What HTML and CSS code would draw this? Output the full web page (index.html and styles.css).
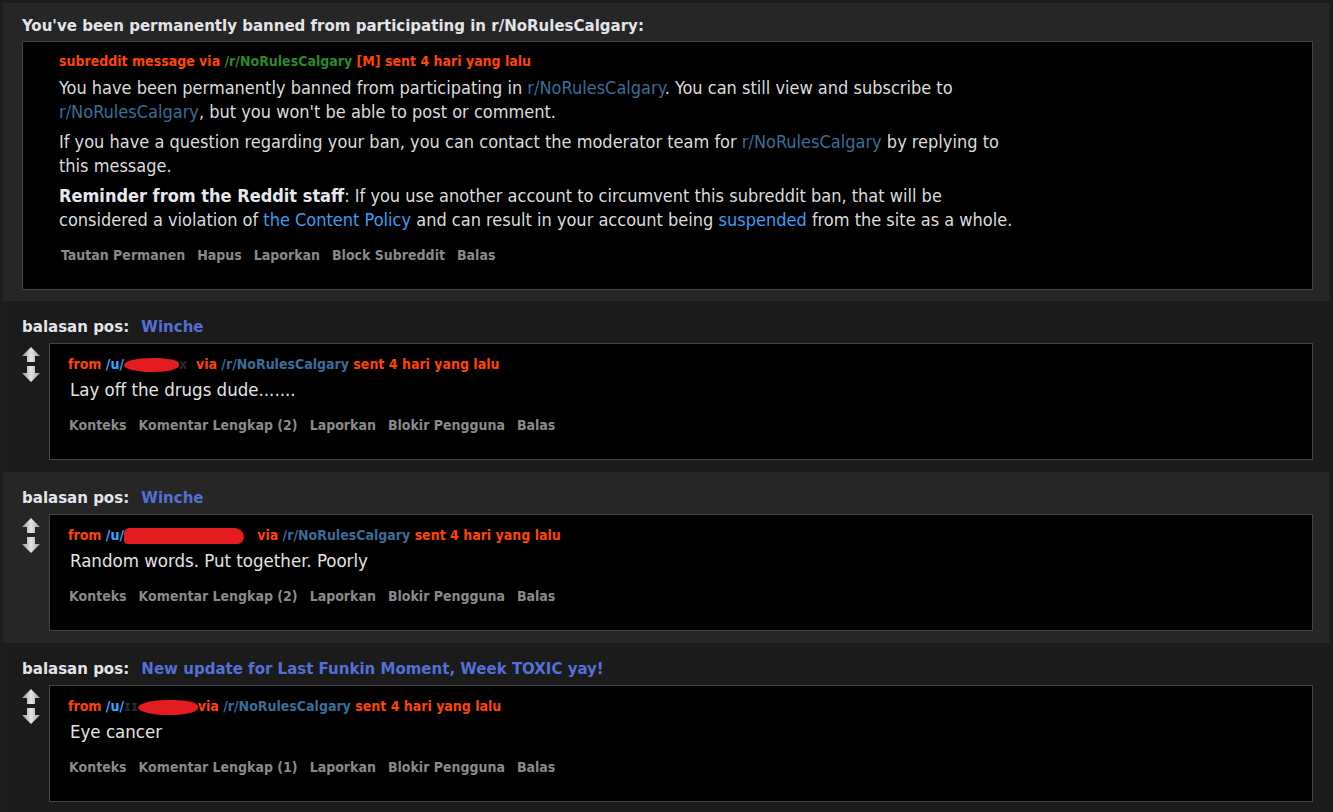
FILE: index.html
```html
<!DOCTYPE html>
<html>
<head>
<meta charset="utf-8">
<link rel="stylesheet" href="styles.css">
</head>
<body>
<div class="page">
  <section class="sect light first">
    <div class="title">You've been permanently banned from participating in r/NoRulesCalgary:</div>
    <div class="box mainbox">
      <div class="head"><span class="or">subreddit message via </span><span class="green">/r/NoRulesCalgary</span> <span class="or">[M] sent 4 hari yang lalu</span></div>
      <p class="para">You have been permanently banned from participating in <span class="sub">r/NoRulesCalgary</span>. You can still view and subscribe to<br><span class="sub">r/NoRulesCalgary</span>, but you won't be able to post or comment.</p>
      <p class="para">If you have a question regarding your ban, you can contact the moderator team for <span class="sub">r/NoRulesCalgary</span> by replying to<br>this message.</p>
      <p class="para"><b>Reminder from the Reddit staff</b>: If you use another account to circumvent this subreddit ban, that will be<br>considered a violation of <span class="link">the Content Policy</span> and can result in your account being <span class="link">suspended</span> from the site as a whole.</p>
      <div class="actions"><span>Tautan Permanen</span><span>Hapus</span><span>Laporkan</span><span>Block Subreddit</span><span>Balas</span></div>
    </div>
  </section>

  <section class="sect dark">
    <div class="title">balasan pos: <span class="post">Winche</span></div>
    <div class="row">
      <div class="votes"><svg width="18" height="36" viewBox="0 0 18 36"><defs><linearGradient id="g1" x1="0" y1="0" x2="1" y2="0"><stop offset="0" stop-color="#9a9a9a"/><stop offset="0.5" stop-color="#e4e4e4"/><stop offset="1" stop-color="#9a9a9a"/></linearGradient></defs><path d="M9 0 L18 9 L13 9 L13 15 L5 15 L5 9 L0 9 Z" fill="url(#g1)"/><path d="M5 19 L13 19 L13 26 L18 26 L9 35 L0 26 L5 26 Z" fill="url(#g1)"/></svg></div>
      <div class="box reply">
        <div class="head"><span class="or">from </span><span class="user">/u/</span><span class="redact r1"></span><span class="ghost">x</span><span class="or">&nbsp; via </span><span class="sub">/r/NoRulesCalgary</span> <span class="or">sent 4 hari yang lalu</span></div>
        <div class="msg">Lay off the drugs dude.......</div>
        <div class="actions"><span>Konteks</span><span>Komentar Lengkap (2)</span><span>Laporkan</span><span>Blokir Pengguna</span><span>Balas</span></div>
      </div>
    </div>
  </section>

  <section class="sect light">
    <div class="title">balasan pos: <span class="post">Winche</span></div>
    <div class="row">
      <div class="votes"><svg width="18" height="36" viewBox="0 0 18 36"><defs><linearGradient id="g2" x1="0" y1="0" x2="1" y2="0"><stop offset="0" stop-color="#9a9a9a"/><stop offset="0.5" stop-color="#e4e4e4"/><stop offset="1" stop-color="#9a9a9a"/></linearGradient></defs><path d="M9 0 L18 9 L13 9 L13 15 L5 15 L5 9 L0 9 Z" fill="url(#g2)"/><path d="M5 19 L13 19 L13 26 L18 26 L9 35 L0 26 L5 26 Z" fill="url(#g2)"/></svg></div>
      <div class="box reply">
        <div class="head"><span class="or">from </span><span class="user">/u/</span><span class="redact r2"></span><span class="or">&nbsp;&nbsp; via </span><span class="sub">/r/NoRulesCalgary</span> <span class="or">sent 4 hari yang lalu</span></div>
        <div class="msg">Random words. Put together. Poorly</div>
        <div class="actions"><span>Konteks</span><span>Komentar Lengkap (2)</span><span>Laporkan</span><span>Blokir Pengguna</span><span>Balas</span></div>
      </div>
    </div>
  </section>

  <section class="sect dark">
    <div class="title">balasan pos: <span class="post">New update for Last Funkin Moment, Week TOXIC yay!</span></div>
    <div class="row">
      <div class="votes"><svg width="18" height="36" viewBox="0 0 18 36"><defs><linearGradient id="g3" x1="0" y1="0" x2="1" y2="0"><stop offset="0" stop-color="#9a9a9a"/><stop offset="0.5" stop-color="#e4e4e4"/><stop offset="1" stop-color="#9a9a9a"/></linearGradient></defs><path d="M9 0 L18 9 L13 9 L13 15 L5 15 L5 9 L0 9 Z" fill="url(#g3)"/><path d="M5 19 L13 19 L13 26 L18 26 L9 35 L0 26 L5 26 Z" fill="url(#g3)"/></svg></div>
      <div class="box reply">
        <div class="head"><span class="or">from </span><span class="user">/u/</span><span class="ghost">ɪɪ</span><span class="redact r3"></span><span class="or">via </span><span class="sub">/r/NoRulesCalgary</span> <span class="or">sent 4 hari yang lalu</span></div>
        <div class="msg">Eye cancer</div>
        <div class="actions"><span>Konteks</span><span>Komentar Lengkap (1)</span><span>Laporkan</span><span>Blokir Pengguna</span><span>Balas</span></div>
      </div>
    </div>
  </section>
</div>
</body>
</html>
```

FILE: styles.css
```css
html, body {
  margin: 0;
  padding: 0;
  background: #1c1c1c;
}
body {
  font-family: "DejaVu Sans Condensed", "DejaVu Sans", sans-serif;
  font-stretch: condensed;
  color: #dcdcdc;
}
.page {
  padding: 3px 3px 0 3px;
  height: 809px;
  overflow: hidden;
}
.sect {
  padding: 15px 17px 12px 19px;
}
.sect.first {
  padding-top: 12px;
  padding-bottom: 11px;
}
.first .title {
  margin-bottom: 6px;
}
.light { background: #262626; }
.dark { background: #1b1b1b; }

.title {
  font-weight: bold;
  font-size: 16.7px;
  line-height: 20px;
  color: #e2e4ea;
  margin-bottom: 7px;
  white-space: nowrap;
}
.post {
  color: #5470d6;
  margin-left: 7px;
}
.box {
  background: #000;
  border: 1px solid #454545;
}
.mainbox {
  padding: 10px 20px 26px 36px;
}
.head {
  font-weight: bold;
  font-size: 14px;
  line-height: 18px;
  white-space: nowrap;
}
.or { color: #ff4500; }
.green { color: #2a8a2a; }
.sub { color: #3a6d97; }
.user { color: #3ba0ff; }
.link { color: #3c9df2; }
.para {
  margin: 6px 0 0 0;
  font-size: 18px;
  line-height: 24px;
  color: #dcdcdc;
  white-space: nowrap;
}
.para b { color: #e6e8ee; }
.actions {
  display: flex;
  gap: 12px;
  margin-top: 15px;
  margin-left: 2px;
  font-weight: bold;
  font-size: 14px;
  line-height: 16px;
  color: #8a8a8a;
  white-space: nowrap;
}
.row {
  display: flex;
  gap: 9px;
  align-items: flex-start;
}
.votes {
  width: 18px;
  margin-top: 4px;
  flex: none;
}
.votes svg { display: block; }
.reply {
  flex: 1;
  padding: 11px 20px 26px 18px;
}
.msg {
  margin-top: 6px;
  margin-left: 2px;
  font-size: 18.5px;
  line-height: 22px;
  color: #e4e4e4;
}
.reply .actions {
  margin-left: 1px;
  margin-top: 16px;
}
.redact {
  display: inline-block;
  background: #e31c1f;
  vertical-align: middle;
  height: 14px;
  border-radius: 50% 40% 45% 50%;
}
.r1 { width: 55px; }
.r2 { width: 120px; height: 16px; border-radius: 8px 14px 10px 6px; }
.r3 { width: 60px; height: 15px; }
.ghost {
  color: #2a2a2a;
}
```
